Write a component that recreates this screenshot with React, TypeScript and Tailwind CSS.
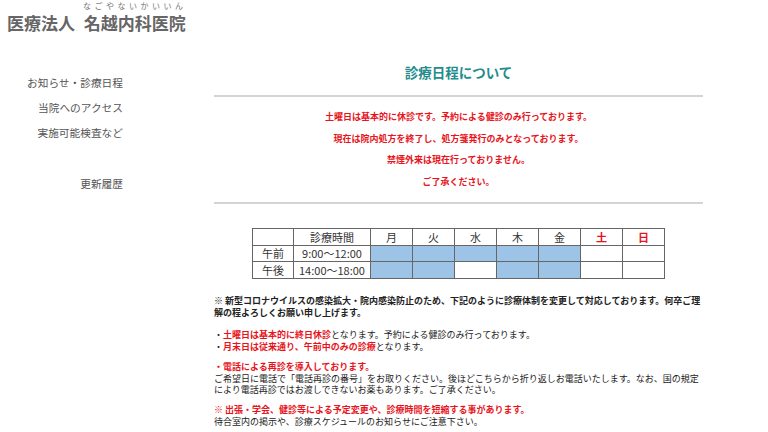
import React from "react";

const jp = { fontFamily: '"Noto Sans CJK JP", "Noto Sans", sans-serif' };

const days = ["月", "火", "水", "木", "金", "土", "日"];
const am = [true, true, true, true, true, false, false];
const pm = [true, true, false, true, true, false, false];

function Cell({ on }: { on: boolean }) {
  return <td className={`border border-[#666] ${on ? "bg-[#9dc3e6]" : "bg-white"}`}></td>;
}

export default function App() {
  return (
    <div className="w-[768px] h-[432px] bg-white overflow-hidden text-[#333]" style={jp}>
      {/* header */}
      <div className="h-[56px] pl-[7px] text-[#666] font-bold">
        <div className="flex items-end">
          <span className="text-[17px] leading-[22px]">医療法人</span>
          <span className="flex flex-col items-center ml-[8px]">
            <span className="text-[8px] leading-[12px] tracking-[3.5px] font-normal text-[#777]">なごやないかいいん</span>
            <span className="text-[17px] leading-[22px]">名越内科医院</span>
          </span>
        </div>
      </div>

      <div className="flex">
        {/* sidebar */}
        <div className="w-[123px] text-right text-[10.7px] text-[#555] pt-[14px] flex flex-col">
          <span className="leading-[25px]">お知らせ・診療日程</span>
          <span className="leading-[25px]">当院へのアクセス</span>
          <span className="leading-[25px]">実施可能検査など</span>
          <span className="h-[26px]"></span>
          <span className="leading-[25px]">更新履歴</span>
        </div>

        {/* main */}
        <div className="ml-[91px] w-[489px]">
          <div className="mt-[6px] text-center text-[13.5px] leading-[20px] font-bold text-[#238c8c]">診療日程について</div>
          <div className="mt-[13px] border-t-2 border-[#d4d4d4]"></div>
          <div className="mt-[9px] text-center text-[9px] font-bold text-[#e8141c] leading-[21.6px]">
            <div>土曜日は基本的に休診です。予約による健診のみ行っております。</div>
            <div>現在は院内処方を終了し、処方箋発行のみとなっております。</div>
            <div>禁煙外来は現在行っておりません。</div>
            <div>ご了承ください。</div>
          </div>
          <div className="mt-[10px] border-t-2 border-[#d4d4d4]"></div>

          <div className="flex justify-center mt-[24px]">
            <table className="border-collapse text-[11px] leading-[15px] text-[#333]">
              <tbody>
                <tr className="h-[17px]">
                  <td className="border border-[#666] w-[41px]"></td>
                  <td className="border border-[#666] w-[77px] text-center">診療時間</td>
                  {days.map((d, i) => (
                    <td
                      key={d}
                      className={`border border-[#666] w-[42px] text-center ${i >= 5 ? "text-[#e8141c] font-bold" : ""}`}
                    >
                      {d}
                    </td>
                  ))}
                </tr>
                <tr className="h-[16px]">
                  <td className="border border-[#666] text-center">午前</td>
                  <td className="border border-[#666] text-center">9:00～12:00</td>
                  {am.map((on, i) => (
                    <Cell key={i} on={on} />
                  ))}
                </tr>
                <tr className="h-[17px]">
                  <td className="border border-[#666] text-center">午後</td>
                  <td className="border border-[#666] text-center">14:00～18:00</td>
                  {pm.map((on, i) => (
                    <Cell key={i} on={on} />
                  ))}
                </tr>
              </tbody>
            </table>
          </div>

          <div className="mt-[16px] text-[9px] leading-[11.5px] whitespace-nowrap text-[#222]">
            <p className="font-bold">
              ※ 新型コロナウイルスの感染拡大・院内感染防止のため、下記のように診療体制を変更して対応しております。何卒ご理
              <br />
              解の程よろしくお願い申し上げます。
            </p>
            <p className="mt-[11px]">
              ・<span className="font-bold text-[#e8141c]">土曜日は基本的に終日休診</span>となります。予約による健診のみ行っております。
              <br />
              ・<span className="font-bold text-[#e8141c]">月末日は従来通り、午前中のみの診療</span>となります。
            </p>
            <p className="mt-[9px]">
              <span className="font-bold text-[#e8141c]">・電話による再診を導入しております。</span>
              <br />
              ご希望日に電話で「電話再診の番号」をお取りください。後ほどこちらから折り返しお電話いたします。なお、国の規定
              <br />
              により電話再診ではお渡しできないお薬もあります。ご了承ください。
            </p>
            <p className="mt-[8.5px]">
              <span className="font-bold text-[#e8141c]">※ 出張・学会、健診等による予定変更や、診療時間を短縮する事があります。</span>
              <br />
              待合室内の掲示や、診療スケジュールのお知らせにご注意下さい。
            </p>
          </div>
        </div>
      </div>
    </div>
  );
}
